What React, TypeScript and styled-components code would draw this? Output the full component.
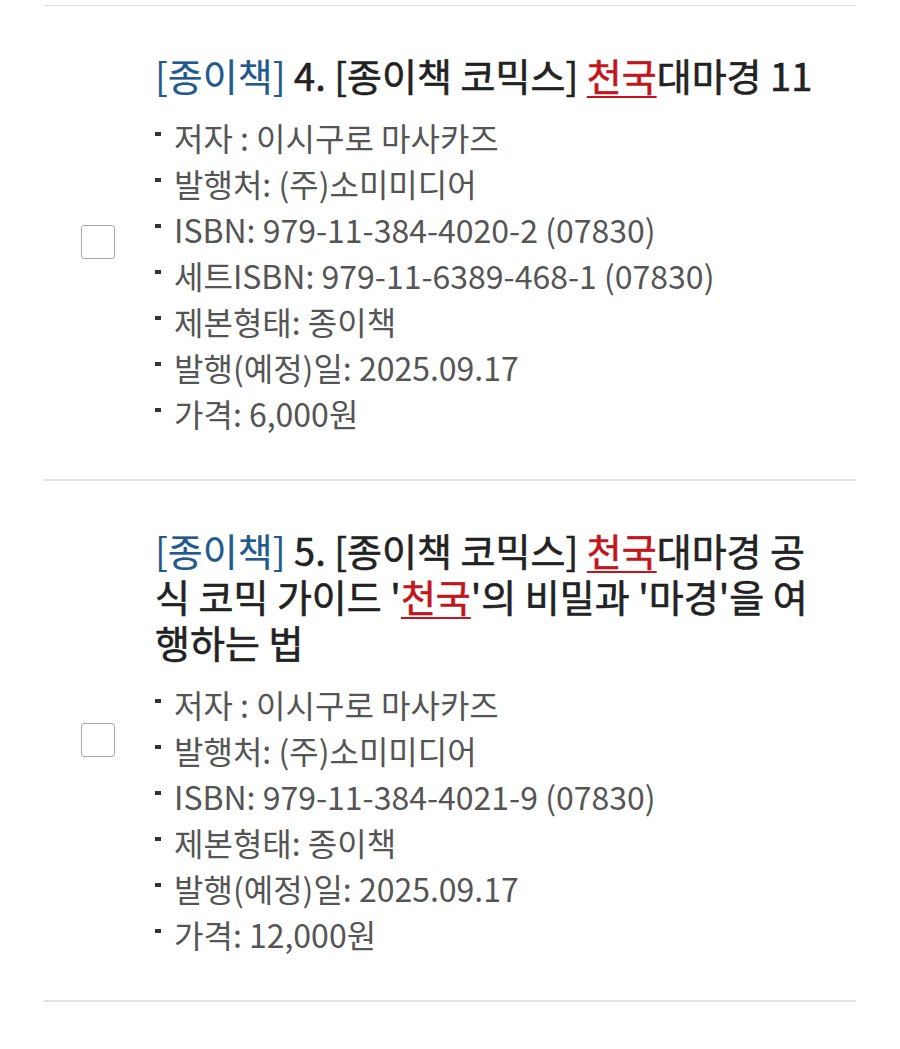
import React from 'react';
import styled, { createGlobalStyle } from 'styled-components';

const GlobalStyle = createGlobalStyle`
  html, body {
    margin: 0;
    padding: 0;
    background: #fff;
  }
  body {
    font-family: "Noto Sans CJK KR", "Noto Sans", sans-serif;
  }
`;

const Page = styled.div`
  padding: 5px 44px 0;
`;

const List = styled.ul`
  list-style: none;
  margin: 0;
  padding: 0;
  border-top: 1px solid #dcdcdc;
`;

const Item = styled.li`
  display: flex;
  align-items: center;
  padding: 46px 0 43px 37px;
  border-bottom: 2px solid #e2e2e2;
`;

const Check = styled.span`
  flex: none;
  width: 34px;
  height: 34px;
  margin-top: -4px;
  border: 1.5px solid #a9a9a9;
  border-radius: 3px;
  box-sizing: border-box;
  background: #fff;
`;

const Body = styled.div`
  flex: 1;
  margin-left: 40px;
  padding-right: 32px;
  min-width: 0;
`;

const Title = styled.div`
  font-size: 38px;
  font-weight: 400;
  line-height: 46px;
  color: #222;
  -webkit-text-stroke: 0.6px #222;
  margin-bottom: 16px;
`;

const Kind = styled.span`
  color: #235a8e;
  -webkit-text-stroke: 0.2px #235a8e;
`;

const Hit = styled.span`
  color: #c2161c;
  -webkit-text-stroke: 0.6px #c2161c;
  text-decoration: underline;
  text-decoration-thickness: 2px;
  text-underline-offset: 5px;
`;

const Details = styled.ul`
  list-style: none;
  margin: 0;
  padding: 0;
`;

const Detail = styled.li`
  display: flex;
  align-items: center;
  font-size: 32px;
  line-height: 46px;
  color: #555;

  &::before {
    content: '';
    flex: none;
    width: 6px;
    height: 4px;
    margin: -6px 13px 0 0;
    background: #333;
  }
`;

type Book = {
  no: number;
  title: React.ReactNode;
  details: string[];
};

const books: Book[] = [
  {
    no: 4,
    title: (
      <>
        [종이책 코믹스] <Hit>천국</Hit>대마경 11
      </>
    ),
    details: [
      '저자 : 이시구로 마사카즈',
      '발행처: (주)소미미디어',
      'ISBN: 979-11-384-4020-2 (07830)',
      '세트ISBN: 979-11-6389-468-1 (07830)',
      '제본형태: 종이책',
      '발행(예정)일: 2025.09.17',
      '가격: 6,000원',
    ],
  },
  {
    no: 5,
    title: (
      <>
        [종이책 코믹스] <Hit>천국</Hit>대마경 공식 코믹 가이드 '<Hit>천국</Hit>'의 비밀과 '마경'을 여행하는 법
      </>
    ),
    details: [
      '저자 : 이시구로 마사카즈',
      '발행처: (주)소미미디어',
      'ISBN: 979-11-384-4021-9 (07830)',
      '제본형태: 종이책',
      '발행(예정)일: 2025.09.17',
      '가격: 12,000원',
    ],
  },
];

export default function App() {
  return (
    <>
      <GlobalStyle />
      <Page>
        <List>
          {books.map((book) => (
            <Item key={book.no}>
              <Check />
              <Body>
                <Title>
                  <Kind>[종이책]</Kind> {book.no}. {book.title}
                </Title>
                <Details>
                  {book.details.map((d) => (
                    <Detail key={d}>{d}</Detail>
                  ))}
                </Details>
              </Body>
            </Item>
          ))}
        </List>
      </Page>
    </>
  );
}
